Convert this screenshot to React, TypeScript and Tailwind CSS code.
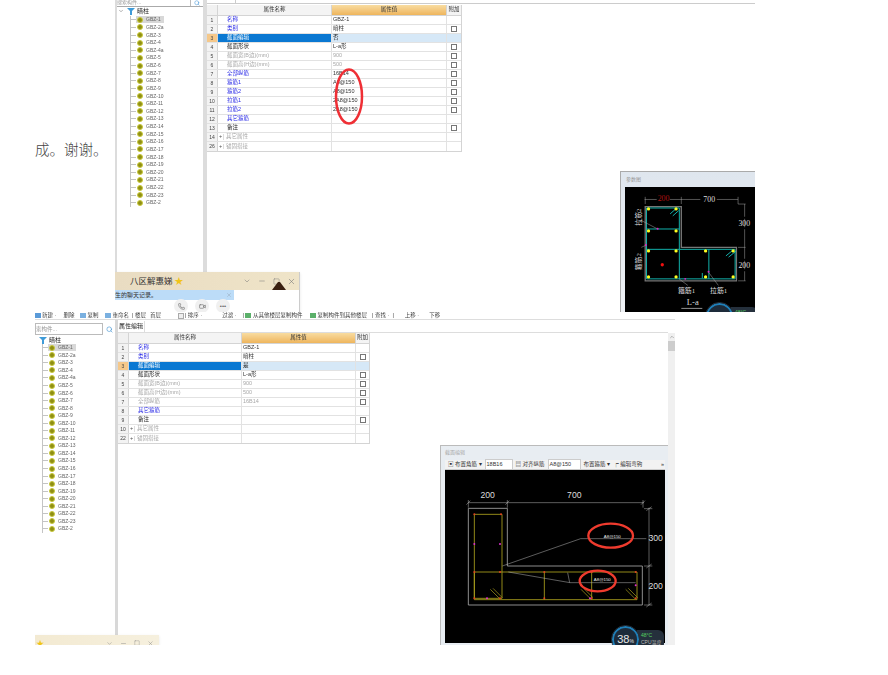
import React from 'react';
import { ChevronDown, ChevronUp, Minus, Phone, Search, Square, Video, X } from 'lucide-react';

const cjk = "font-['Liberation_Sans','Noto_Sans_CJK_SC',sans-serif]";

type Row = { n: number; name: string; val?: string; tone?: 'blue' | 'gray' | 'dark'; check?: boolean; sel?: boolean; plus?: boolean };

const rowsA: Row[] = [
  { n: 1, name: '名称', val: 'GBZ-1', tone: 'blue' },
  { n: 2, name: '类别', val: '暗柱', tone: 'blue', check: true },
  { n: 3, name: '截面编辑', val: '否', sel: true },
  { n: 4, name: '截面形状', val: 'L-a形', tone: 'dark', check: true },
  { n: 5, name: '截面宽(B边)(mm)', val: '900', tone: 'gray', check: true },
  { n: 6, name: '截面高(H边)(mm)', val: '500', tone: 'gray', check: true },
  { n: 7, name: '全部纵筋', val: '16B14', tone: 'blue', check: true },
  { n: 8, name: '箍筋1', val: 'A8@150', tone: 'blue', check: true },
  { n: 9, name: '箍筋2', val: 'A8@150', tone: 'blue', check: true },
  { n: 10, name: '拉筋1', val: '2A8@150', tone: 'blue', check: true },
  { n: 11, name: '拉筋2', val: '2A8@150', tone: 'blue', check: true },
  { n: 12, name: '其它箍筋', tone: 'blue' },
  { n: 13, name: '备注', tone: 'dark', check: true },
  { n: 14, name: '其它属性', tone: 'gray', plus: true },
  { n: 26, name: '锚固搭接', tone: 'gray', plus: true },
];

const rowsB: Row[] = [
  { n: 1, name: '名称', val: 'GBZ-1', tone: 'blue' },
  { n: 2, name: '类别', val: '暗柱', tone: 'blue', check: true },
  { n: 3, name: '截面编辑', val: '是', sel: true },
  { n: 4, name: '截面形状', val: 'L-a形', tone: 'dark', check: true },
  { n: 5, name: '截面宽(B边)(mm)', val: '900', tone: 'gray', check: true },
  { n: 6, name: '截面高(H边)(mm)', val: '500', tone: 'gray', check: true },
  { n: 7, name: '全部纵筋', val: '16B14', tone: 'gray', check: true },
  { n: 8, name: '其它箍筋', tone: 'blue' },
  { n: 9, name: '备注', tone: 'dark', check: true },
  { n: 10, name: '其它属性', tone: 'gray', plus: true },
  { n: 22, name: '锚固搭接', tone: 'gray', plus: true },
];

const namesA = ['1', '2a', '3', '4', '4a', '5', '6', '7', '8', '9', '10', '11', '12', '13', '14', '15', '16', '17', '18', '19', '20', '21', '22', '23', '2'];

function PropTable({ rows, wide }: { rows: Row[]; wide?: boolean }) {
  const nameW = wide ? 'w-[114px]' : 'w-[113px]';
  const valW = wide ? 'w-[115px]' : 'w-[114px]';
  return (
    <div className={`${wide ? 'w-[255px]' : 'w-[252px]'} border-b border-r border-[#d4d4d4] text-[5.5px] leading-none ${cjk}`}>
      <div className="flex h-[11px] border-b border-[#d4d4d4] text-[#333]">
        <div className="w-[11px] bg-[#f1f1f1] border-r border-[#d4d4d4]" />
        <div className={`${nameW} bg-[#f4f4f4] border-r border-[#d4d4d4] flex items-center justify-center`}>属性名称</div>
        <div className={`${valW} bg-linear-to-b from-[#f8dca0] to-[#eeb55c] border-r border-[#d4d4d4] flex items-center justify-center`}>属性值</div>
        <div className="flex-1 bg-[#f4f4f4] flex items-center justify-center">附加</div>
      </div>
      {rows.map((r) => {
        const nameColor = r.sel
          ? 'text-white bg-[#0a78d2]'
          : r.tone === 'blue'
            ? 'text-[#2b2be6]'
            : r.tone === 'gray'
              ? 'text-[#a8a8a8]'
              : 'text-[#222]';
        return (
          <div key={r.n} className="flex h-[9px] border-b border-[#e2e2e2] last:border-b-0">
            <div className={`w-[11px] border-r border-[#d4d4d4] flex items-center justify-center text-[5px] ${r.sel ? 'bg-[#f5c88a]' : 'bg-[#f3f3f3]'} text-[#444]`}>{r.n}</div>
            {r.plus ? (
              <div className={`${nameW} border-r border-[#e2e2e2] flex items-center text-[#a8a8a8]`}>
                <span className="w-[6px] text-center text-[#555] border-r border-[#ddd]">+</span>
                <span className="pl-[2px]">{r.name}</span>
              </div>
            ) : (
              <div className={`${nameW} border-r border-[#e2e2e2] flex items-center pl-[9px] ${nameColor}`}>{r.name}</div>
            )}
            <div className={`${valW} border-r border-[#e2e2e2] flex items-center pl-[1px] ${r.sel ? 'bg-[#d6e8f7] text-[#222]' : r.tone === 'gray' ? 'text-[#a8a8a8]' : 'text-[#333]'}`}>{r.val}</div>
            <div className={`flex-1 flex items-center justify-center ${r.sel ? 'bg-[#d6e8f7]' : ''}`}>
              {r.check && <span className="w-[6px] h-[6px] border border-[#777] bg-white" />}
            </div>
          </div>
        );
      })}
    </div>
  );
}

function Tree({ indent, rowH, root }: { indent: string; rowH: string; root?: string }) {
  return (
    <div className={`pt-[1px] ${indent} ${cjk}`}>
      <div className={`flex items-center h-[8px] text-[6px] text-[#222] gap-[2px] -ml-[2px] ${root ?? ''}`}>
        <svg width="8" height="8" viewBox="0 0 8 8">
          <path d="M0 1h8L5 4v4H3V4z" fill="#3f9bd8" />
        </svg>
        <span>暗柱</span>
      </div>
      <div className="border-l border-[#c4c4c4] ml-[1px] mb-[4px]">
        {namesA.map((n, i) => (
          <div key={n} className={`flex items-center ${rowH}`}>
            <span className="w-[5px] h-px bg-[#c4c4c4]" />
            <span className={`flex items-center gap-[3px] pl-[1px] pr-[3px] h-[7px] ${i === 0 ? 'bg-[#d8d8d8]' : ''}`}>
              <span className="w-[6px] h-[6px] rounded-full bg-[#8f8f14] border border-[#c8c83c]" />
              <span className="text-[5px] leading-none text-[#666]">GBZ-{n}</span>
            </span>
          </div>
        ))}
      </div>
    </div>
  );
}

function CpuBadge({ value }: { value: string }) {
  return (
    <div className="flex items-start">
      <div className="w-[27px] h-[27px] rounded-full border-2 border-[#1f7fb8] bg-[#1d2b3a] outline outline-[#26323f] text-[#e8e8e8] flex items-center justify-center text-[11px] leading-none font-['Liberation_Sans',sans-serif] z-10">
        {value}
        <span className="text-[5px] mt-[3px]">%</span>
      </div>
      <div className={`-ml-[2px] mt-[4px] w-[27px] h-[20px] rounded-r-[6px] bg-[#25303c] text-[#55d060] text-[5px] leading-[7px] pl-[4px] pt-[2px] ${cjk}`}>
        48°C
        <div className="text-[#bbb]">CPU温度</div>
      </div>
    </div>
  );
}

function SmallDiagram() {
  const c = '#12b5ae';
  const dots = [[112, 145], [196, 145], [112, 212], [196, 212], [112, 273], [196, 273], [286, 273], [370, 273], [112, 352], [196, 352], [286, 352], [370, 352]];
  return (
    <svg viewBox="42 78 393 381" className="w-full flex-1 min-h-0 bg-black" style={{ fontFamily: "'Liberation Serif','Noto Sans CJK SC',serif" }}>
      <path d="M102 138H212V262H380V364H102Z" fill="none" stroke="#777" strokeWidth="4" />
      <path d="M106 142H206V268H376V358H106ZM106 206H206M106 268H206M206 268V358M296 268V358" fill="none" stroke={c} strokeWidth="3" />
      <path d="M178 160l18-16M186 166l18-16M348 288l22-18M356 292l22-18M276 340v16" stroke={c} strokeWidth="3" fill="none" />
      {dots.map(([x, y]) => (
        <circle key={`${x}-${y}`} cx={x} cy={y} r="5" fill="#ffff20" />
      ))}
      <circle cx="154" cy="315" r="5" fill="#f01010" />
      <g stroke="#aaa" strokeWidth="1.5" fill="none">
        <path d="M100 116H385M102 108V130M212 108V130M385 108V130M385 130H408M385 262H408M385 364H408M405 130V364" />
        <path d="M90 180L138 205M90 262L105 255M205 358L232 378M295 338L325 378" />
      </g>
      <path d="M137 116h40" stroke="#000" strokeWidth="6" />
      <path d="M270 116h50" stroke="#000" strokeWidth="6" />
      <path d="M392 172h24M392 204h24M392 300h24M392 332h24" stroke="#000" strokeWidth="6" />
      <text x="158" y="122" textAnchor="middle" fontSize="24" fill="#b01010">200</text>
      <text x="297" y="124" textAnchor="middle" fontSize="24" fill="#ddd">700</text>
      <text x="404" y="196" textAnchor="middle" fontSize="24" fill="#ddd">300</text>
      <text x="404" y="324" textAnchor="middle" fontSize="24" fill="#ddd">200</text>
      <text x="228" y="400" textAnchor="middle" fontSize="21" fill="#ddd">箍筋1</text>
      <text x="326" y="400" textAnchor="middle" fontSize="21" fill="#ddd">拉筋1</text>
      <text transform="translate(88 196) rotate(-90)" fontSize="21" fill="#ddd">拉筋2</text>
      <text transform="translate(88 332) rotate(-90)" fontSize="21" fill="#ddd">箍筋2</text>
      <text x="247" y="438" textAnchor="middle" fontSize="26" fill="#ddd">L-a</text>
      <path d="M212 448H276" stroke="#ddd" strokeWidth="2" />
      {[[140, 205], [104, 255], [224, 358], [295, 336]].map(([x, y]) => (
        <circle key={`${x}${y}`} cx={x} cy={y} r="3" fill="#e020c0" />
      ))}
    </svg>
  );
}

function LargeDiagram() {
  const y = '#b0a51e';
  const reds = [[116, 225], [196, 225], [116, 398], [193, 398], [326, 398], [468, 398], [600, 398], [116, 477], [193, 477], [326, 477], [468, 477], [600, 477]];
  const pinks = [[116, 314], [193, 314], [154, 477], [463, 477], [600, 438]];
  return (
    <svg viewBox="28 93 660 517" className="w-full flex-1 min-h-0 bg-black" style={{ fontFamily: "'Liberation Sans',sans-serif" }}>
      <path d="M98 207H215V380H620V497H98Z" fill="none" stroke="#a8a8a8" strokeWidth="2.5" />
      <path d="M116 225H199V477H116ZM116 398H604V481H116ZM326 398V481M468 398V481" fill="none" stroke={y} strokeWidth="2.5" />
      <path d="M164 450l28 28M172 447l28 28M436 450l28 28M444 447l28 28M570 450l28 28M578 447l28 28" stroke={y} strokeWidth="2" />
      {reds.map(([cx, cy]) => (
        <circle key={`${cx}-${cy}`} cx={cx} cy={cy} r="3" fill="#e04020" />
      ))}
      {pinks.map(([cx, cy]) => (
        <circle key={`${cx}-${cy}`} cx={cx} cy={cy} r="3" fill="#e030d0" />
      ))}
      <g stroke="#b8b8b8" strokeWidth="1.5" fill="none">
        <path d="M98 190H625M98 182V205M215 182V205M622 182V205M92 196l12-12M209 196l12-12M616 196l12-12" />
        <path d="M640 205V497M625 208H650M625 380H650M625 497H650M632 214l16-12M632 386l16-12M632 503l16-12" />
        <path d="M200 380L435 298H632M218 398L403 430H600M396 400l6 30" />
      </g>
      <text x="156" y="175" textAnchor="middle" fontSize="26" fill="#ddd">200</text>
      <text x="416" y="175" textAnchor="middle" fontSize="26" fill="#ddd">700</text>
      <text x="660" y="304" textAnchor="middle" fontSize="26" fill="#ddd">300</text>
      <text x="660" y="448" textAnchor="middle" fontSize="26" fill="#ddd">200</text>
      <text x="530" y="296" textAnchor="middle" fontSize="13" fill="#eee">A8@150</text>
      <text x="500" y="426" textAnchor="middle" fontSize="13" fill="#eee">A8@150</text>
      <ellipse cx="525" cy="289" rx="67" ry="36" fill="none" stroke="#ef3b2e" strokeWidth="7" />
      <ellipse cx="486" cy="425" rx="54" ry="31" fill="none" stroke="#ef3b2e" strokeWidth="7" />
    </svg>
  );
}

function ChatWindow() {
  return (
    <div className={`absolute left-0 top-[272px] w-[185px] h-[40px] bg-white border-r border-[#ccc] shadow-sm ${cjk}`}>
      <div className="h-[18px] bg-linear-to-r from-[#e9dcc2] to-[#efe4c8] flex items-center pl-[15px] text-[8.5px] text-[#333] leading-none">
        八区解惠娣
        <span className="text-[#f0c419] text-[9px] ml-[2px]">★</span>
        <div className="ml-auto flex items-center gap-[7px] pr-[3px] text-[#777]">
          <ChevronDown size={8} strokeWidth={1.5} />
          <Minus size={8} strokeWidth={1.5} />
          <Square size={7} strokeWidth={1.5} />
          <X size={9} strokeWidth={1.5} />
        </div>
      </div>
      <div className="w-[119px] h-[10px] bg-[#bcdcf8] flex items-center text-[6px] text-[#333] pr-[2px]">
        生的聊天记录。
        <X size={6} className="ml-auto text-[#9ab]" />
      </div>
      <div className="flex gap-[7px] pl-[59px] -mt-[1px]">
        <span className="w-[14px] h-[14px] rounded-full bg-[#f0f0f0] flex items-center justify-center"><Phone size={7} className="text-[#666]" /></span>
        <span className="w-[14px] h-[14px] rounded-full bg-[#f0f0f0] flex items-center justify-center"><Video size={7} className="text-[#666]" /></span>
        <span className="w-[14px] h-[14px] rounded-full bg-[#f0f0f0] flex items-center justify-center text-[6px] text-[#666]">•••</span>
      </div>
      <svg className="absolute left-[157px] top-[9px]" width="14" height="9" viewBox="0 0 14 9">
        <path d="M0 9L6 1h2l6 8z" fill="#3a2010" />
      </svg>
    </div>
  );
}

function ToolIcon({ color }: { color: string }) {
  return <span className={`inline-block w-[6px] h-[5px] ${color}`} />;
}

export default function App() {
  return (
    <div className={`w-[888px] h-[675px] bg-white overflow-hidden ${cjk}`}>
      <div className="flex h-[312px]">
        <div className="w-[115px] pl-[35px] pt-[141px] text-[14.5px] leading-[19px] text-[#444] font-light shrink-0 whitespace-nowrap">成。谢谢。</div>

        <div className="relative w-[640px] h-full overflow-hidden blur-[0.5px] flex">
          <div className="w-[92px] h-[272px] border-l-2 border-l-[#dcdcdc] border-r-[4px] border-r-[#dcdcdc] shrink-0 flex flex-col">
            <div className="flex h-[7px] border-b border-[#aaa]">
              <div className="flex-1 border-r border-[#bbb] text-[5px] leading-none text-[#999]">搜索构件...</div>
              <div className="w-[12px] flex justify-center"><Search size={6} className="text-[#3b8fd0]" /></div>
            </div>
            <div className="flex">
              <ChevronDown size={6} className="ml-[1px] mt-[1px] text-[#666]" />
              <Tree indent="pl-[5px]" rowH="h-[7.63px]" root="-mt-[1px] mb-[1px]" />
            </div>
          </div>
          <div className="flex-1">
            <div className="h-[4px] border-b border-[#ccc]">
              <div className="w-[29px] h-full border-r border-[#ccc]" />
            </div>
            <div className="pt-[1px]">
              <PropTable rows={rowsA} wide />
            </div>
          </div>
          <svg className="absolute left-[219px] top-[68px]" width="32" height="58" viewBox="0 0 32 58">
            <ellipse cx="15" cy="28.5" rx="13" ry="27" fill="none" stroke="#ef2f35" strokeWidth="2.5" />
          </svg>
          <div className="absolute left-[505px] top-[171px] w-[135px] h-[141px] bg-linear-to-b from-[#dfe6ee] to-[#eef1f5] border-l border-t border-[#aaa] flex flex-col pl-[4px]">
            <div className="h-[15px] text-[5px] text-[#999] flex items-center pl-[1px] shrink-0">参数图</div>
            <SmallDiagram />
          </div>
          <div className="absolute left-[591px] top-[303px]"><CpuBadge value="37" /></div>
          <ChatWindow />
        </div>
      </div>

      <div className="relative ml-[35px] w-[640px] h-[333px] overflow-hidden blur-[0.5px] flex flex-col">
        <div className="h-[8px] border-b border-[#ddd] flex items-center text-[5.5px] leading-none text-[#444] whitespace-nowrap overflow-hidden shrink-0">
          <ToolIcon color="bg-[#5a9ad8]" />
          <span className="ml-[1px]">新建 ·</span>
          <span className="ml-[7px]">删除</span>
          <ToolIcon color="ml-[6px] bg-[#7ab0e0]" />
          <span className="ml-[1px]">复制</span>
          <ToolIcon color="ml-[7px] bg-[#7ab0e0]" />
          <span className="ml-[1px]">重命名</span>
          <span className="ml-[3px]">| 楼层</span>
          <span className="ml-[4px]">首层</span>
          <span className="ml-[17px] w-[6px] h-[6px] border border-[#aaa] bg-[#eee]" />
          <span className="ml-[1px]">| 排序 ·</span>
          <span className="ml-[20px]">过滤 ·</span>
          <span className="ml-[6px]">|</span>
          <ToolIcon color="ml-[1px] bg-[#5bb06a]" />
          <span className="ml-[2px]">从其他楼层复制构件</span>
          <ToolIcon color="ml-[7px] bg-[#5bb06a]" />
          <span className="ml-[2px]">复制构件到其他楼层</span>
          <span className="ml-[5px]">| 查找 ·</span>
          <span className="ml-[3px]">|</span>
          <span className="ml-[11px]">上移 ·</span>
          <span className="ml-[10px]">下移</span>
        </div>
        <div className="flex flex-1 min-h-0">
          <div className="w-[83px] border-r-[3px] border-[#d8d8d8] shrink-0 flex flex-col">
            <div className="flex h-[12px] mt-[3px] shrink-0">
              <div className="w-[68px] border border-[#bbb] text-[5.5px] text-[#999] flex items-center">索构件...</div>
              <div className="flex-1 flex justify-center items-center"><Search size={7} className="text-[#3b8fd0]" /></div>
            </div>
            <Tree indent="pl-[6px]" rowH="h-[7.55px]" />
          </div>
          <div className="flex-1 min-w-0">
            <div className="h-[13px] border-b border-[#ddd] flex items-end">
              <span className="h-[11px] w-[27px] border-r border-[#ddd] text-[6px] text-[#222] flex items-center justify-center">属性编辑</span>
            </div>
            <PropTable rows={rowsB} />
          </div>
          <div className="w-[7px] bg-[#f0f0f0] flex flex-col items-center shrink-0">
            <div className="w-full h-[13px] bg-white" />
            <div className="w-full h-[8px] flex items-center justify-center"><ChevronUp size={6} className="text-[#777]" /></div>
            <div className="w-full h-[10px] bg-[#cdcdcd]" />
          </div>
        </div>
        <div className="absolute left-[405px] top-[133px] w-[228px] h-[200px] bg-[#e8edf2] border-l border-t border-[#bbb] flex flex-col pl-[4px] pr-[3px] pb-[2px]">
          <div className="h-[14px] text-[5px] text-[#aaa] flex items-center shrink-0">截面编辑</div>
          <div className="h-[10px] bg-[#f2f2f2] border-b border-[#ccc] flex items-center gap-[3px] text-[5.5px] text-[#333] shrink-0 whitespace-nowrap">
            <span className="pl-[3px]">▣ 布置角筋 ▾</span>
            <span className="w-[28px] bg-white border border-[#ccc] pl-[1px]">18B16</span>
            <span>▤ 对齐纵筋</span>
            <span className="w-[33px] bg-white border border-[#ccc] pl-[1px]">A8@150</span>
            <span>布置箍筋 ▾</span>
            <span>┍ 编辑弯钩</span>
            <span className="ml-auto pr-[1px]">»</span>
          </div>
          <LargeDiagram />
        </div>
        <div className="absolute left-[577px] top-[314px]"><CpuBadge value="38" /></div>
        <div className="absolute left-0 bottom-0 w-[124px] h-[10px] bg-linear-to-r from-[#f3ead2] to-[#f6f0de] shadow-sm overflow-hidden flex items-start">
          <span className="text-[#f0c419] text-[8px] leading-none mt-[5px] ml-[1px]">★</span>
          <div className="ml-auto flex gap-[7px] pr-[5px] mt-[5px] text-[#888]">
            <ChevronDown size={7} strokeWidth={1.5} />
            <Minus size={7} strokeWidth={1.5} />
            <Square size={6} strokeWidth={1.5} />
            <X size={7} strokeWidth={1.5} />
          </div>
        </div>
      </div>
    </div>
  );
}
